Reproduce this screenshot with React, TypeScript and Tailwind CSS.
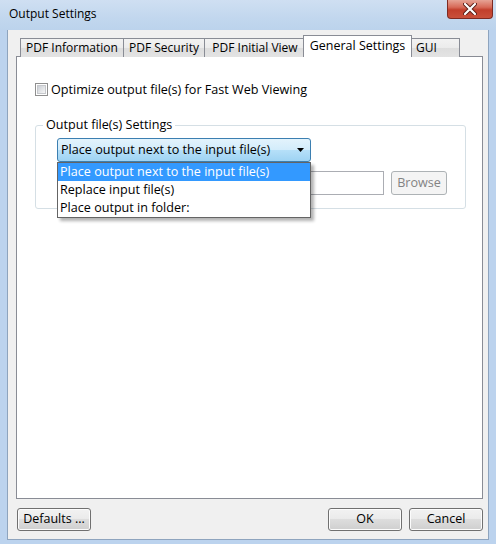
import React from 'react';

const btn =
  "h-[23px] w-[74px] rounded-[3px] border border-[#707070] bg-[linear-gradient(to_bottom,#f2f2f2_0%,#ebebeb_45%,#dddddd_50%,#cfcfcf_100%)] shadow-[inset_0_0_0_1px_#fcfcfc] text-[12.5px] text-black";

const tabs = ["PDF Information", "PDF Security", "PDF Initial View"];

const App = () => {
  return (
    <div className="w-[496px] h-[544px] flex flex-col bg-[#bcd3ee] font-['Open_Sans',sans-serif] text-[12px] text-black">
      {/* title bar */}
      <div className="h-[30px] flex items-start justify-between pl-[9px] pr-[3px] bg-[linear-gradient(to_bottom,#cfdff2,#c2d7ee_60%,#bcd3ec)]">
        <span className="mt-[5px] leading-[18px]">Output Settings</span>
        <div className="w-[46px] h-[19px] flex items-center justify-center rounded-b-[4px] border border-t-0 border-[#7e2a22] bg-[linear-gradient(to_bottom,#e6a395_0%,#d76a58_40%,#c23f2c_55%,#c9503b_100%)]">
          <svg width="14" height="12" viewBox="0 0 14 12">
            <path d="M2 1 L12 11 M12 1 L2 11" stroke="#5a1d16" strokeWidth="4" strokeLinecap="round" />
            <path d="M2 1 L12 11 M12 1 L2 11" stroke="#ffffff" strokeWidth="2.2" strokeLinecap="round" />
          </svg>
        </div>
      </div>

      {/* client area */}
      <div className="flex-1 mx-[7px] mb-[4px] flex flex-col bg-[#f0f0f0] border border-t-0 border-[#8ea4be] pt-[6px] pb-[8px] pl-[8px] pr-[5px]">
        {/* tabs */}
        <div className="h-[21px] flex items-end pl-[4px] relative z-10 -mb-px">
          {tabs.map((t, i) => (
            <div
              key={t}
              className={
                "h-[19px] flex items-center justify-center border border-[#898c95] border-b-0 bg-[linear-gradient(to_bottom,#f2f2f2,#ebebeb_50%,#dddddd_50%,#e3e3e3)] " +
                (i === 0 ? "w-[104px]" : i === 1 ? "w-[82px] -ml-px" : "w-[102px] -ml-px")
              }
            >
              {t}
            </div>
          ))}
          <div className="h-[22px] w-[109px] -ml-[3px] flex items-start justify-center pt-[1px] border border-[#898c95] border-b-0 bg-white text-[12.5px]">
            General Settings
          </div>
          <div className="h-[19px] w-[49px] -ml-px flex items-center pl-[4px] border border-[#898c95] border-b-0 bg-[linear-gradient(to_bottom,#f2f2f2,#ebebeb_50%,#dddddd_50%,#e3e3e3)]">
            GUI
          </div>
        </div>

        {/* panel */}
        <div className="flex-1 bg-white border border-[#898c95] pl-[18px] pr-[16px] text-[12.6px]">
          <label className="mt-[26px] flex items-center gap-[3px] h-[13px]">
            <span className="w-[13px] h-[13px] border border-[#8f8f8f] p-[1px] bg-white">
              <span className="block w-full h-full bg-[linear-gradient(135deg,#cbcfd5,#f6f6f6)] border border-[#c6c8cc]" />
            </span>
            <span className="leading-[16px]">Optimize output file(s) for Fast Web Viewing</span>
          </label>

          <fieldset className="mt-[21px] border border-[#d5dfe5] rounded-[3px] pl-[7px] pb-[13px] shadow-[inset_1px_1px_0_#ffffff]">
            <legend className="px-[3px] leading-[16px]">Output file(s) Settings</legend>
            <div className="ml-[14px] mt-[5px] relative w-[254px]">
              <div className="h-[24px] flex items-center justify-between pl-[3px] pr-[6px] rounded-[3px] border border-[#3c7fb1] bg-[linear-gradient(to_bottom,#e3f3fc_0%,#d2ecfb_50%,#b6e0f9_50%,#9ed3f3_100%)]">
                <span>Place output next to the input file(s)</span>
                <svg width="7" height="4" viewBox="0 0 7 4">
                  <path d="M0 0 H7 L3.5 4 Z" fill="#000" />
                </svg>
              </div>
              <ul className="absolute left-0 top-[24px] z-20 w-[254px] bg-white border border-[#646464] shadow-[3px_3px_3px_rgba(0,0,0,0.3)]">
                <li className="h-[18px] flex items-center pl-[2px] bg-[#3399ff] text-white">Place output next to the input file(s)</li>
                <li className="h-[18px] flex items-center pl-[2px]">Replace input file(s)</li>
                <li className="h-[18px] flex items-center pl-[2px]">Place output in folder:</li>
              </ul>
            </div>
            <div className="ml-[14px] mt-[9px] flex gap-[7px]">
              <div className="h-[24px] w-[327px] border border-[#abadb3] bg-white" />
              <button className="h-[24px] w-[56px] rounded-[3px] border border-[#adb2b5] bg-[#f4f4f4] text-[#838383]">
                Browse
              </button>
            </div>
          </fieldset>
        </div>

        {/* bottom buttons */}
        <div className="mt-[9px] flex items-center pl-[1px]">
          <button className={btn}>Defaults ...</button>
          <div className="flex-1" />
          <button className={btn}>OK</button>
          <button className={btn + " ml-[7px]"}>Cancel</button>
        </div>
      </div>
    </div>
  );
};

export default App;
